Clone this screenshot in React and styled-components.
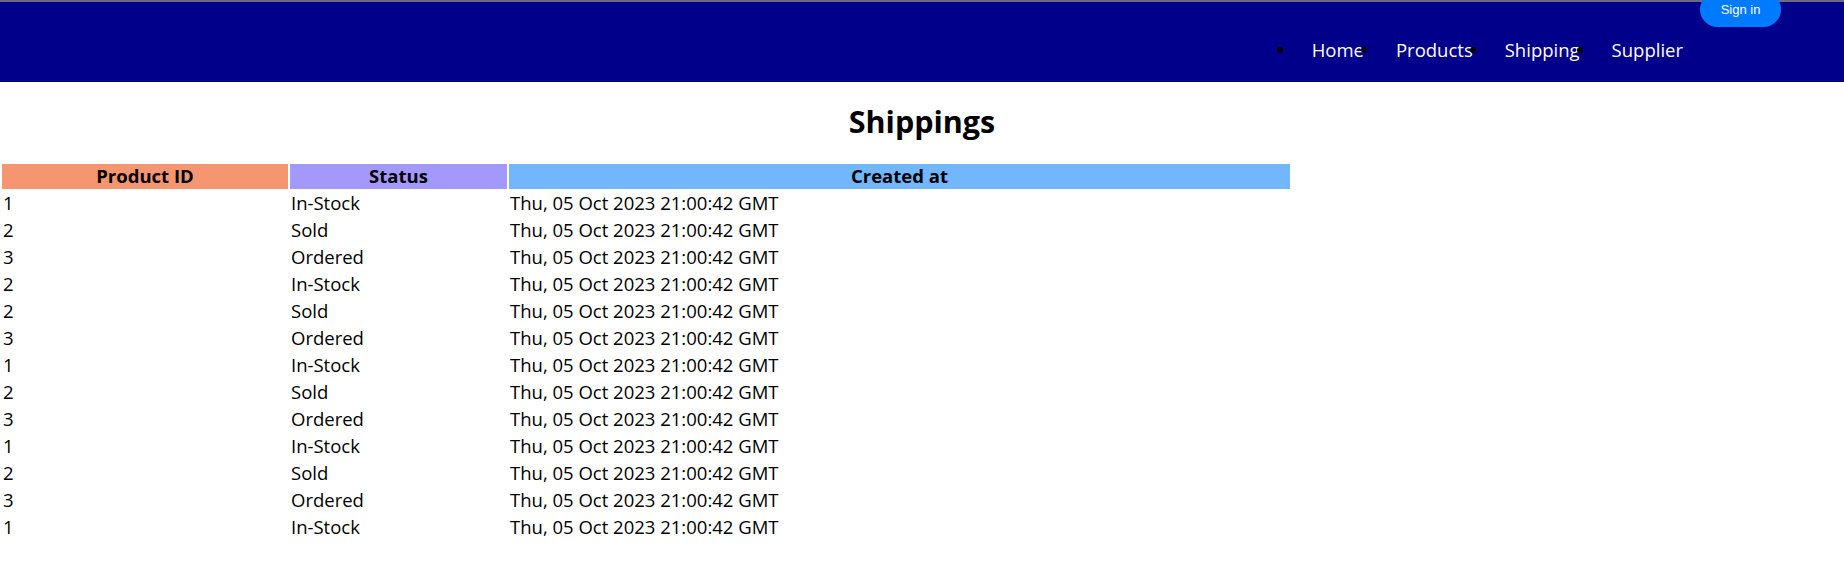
import React from 'react';
import styled, { createGlobalStyle } from 'styled-components';

const GlobalStyle = createGlobalStyle`
  body {
    margin: 0;
    font-family: "Open Sans", "Noto Sans", sans-serif;
    font-size: 18.5px;
    color: #000;
    background: #fff;
  }
`;

const Header = styled.header`
  display: flex;
  flex-direction: column;
  height: 80px;
  background: #00008b;
  border-top: 2px solid #706887;
`;

const TopRow = styled.div`
  display: flex;
  justify-content: flex-end;
  padding-right: 63px;
`;

const SignInButton = styled.button`
  margin-top: -10px;
  width: 81px;
  height: 35px;
  border: none;
  border-radius: 18px;
  background: #007bff;
  color: #fff;
  font-family: "Liberation Sans", Arial, sans-serif;
  font-size: 13px;
  padding: 0;
  cursor: pointer;
`;

const NavList = styled.ul`
  display: flex;
  justify-content: flex-end;
  list-style: none;
  margin: 11px 0 0;
  padding: 0 161px 0 0;
`;

const NavItem = styled.li`
  display: flex;
  align-items: center;
  line-height: 24px;

  &::before {
    content: '';
    width: 6px;
    height: 6px;
    border-radius: 50%;
    background: #000;
    margin-left: -3px;
    margin-right: 29px;
  }

  a {
    color: #fff;
    text-decoration: none;
  }
`;

const Title = styled.h1`
  margin: 21px 0 22px;
  text-align: center;
  font-size: 30.5px;
  line-height: 37px;
  font-weight: 700;
`;

const Table = styled.table`
  width: 1292px;
  table-layout: fixed;
  border-spacing: 2px;
  margin: 0;
`;

const HeadCell = styled.th`
  background: ${props => props.color};
  width: ${props => props.width || 'auto'};
  padding: 0 1px 2px;
  line-height: 23px;
  font-weight: 700;
  text-align: center;
`;

const Cell = styled.td`
  padding: 0 1px 2px;
  line-height: 23px;
  text-align: left;
`;

const links = ['Home', 'Products', 'Shipping', 'Supplier'];

const pattern = [
  [1, 'In-Stock'], [2, 'Sold'], [3, 'Ordered'],
  [2, 'In-Stock'], [2, 'Sold'], [3, 'Ordered'],
  [1, 'In-Stock'], [2, 'Sold'], [3, 'Ordered'],
  [1, 'In-Stock'], [2, 'Sold'], [3, 'Ordered'],
  [1, 'In-Stock'],
];

const shippings = pattern.map(([productId, status]) => ({
  productId,
  status,
  createdAt: 'Thu, 05 Oct 2023 21:00:42 GMT',
}));

const App = () => {
  return <>
    <GlobalStyle />
    <Header>
      <TopRow>
        <SignInButton>Sign in</SignInButton>
      </TopRow>
      <nav>
        <NavList>
          {links.map(link => <NavItem key={link}><a href="#">{link}</a></NavItem>)}
        </NavList>
      </nav>
    </Header>
    <main>
      <Title>Shippings</Title>
      <Table>
        <thead>
          <tr>
            <HeadCell color="#f59670" width="284px">Product ID</HeadCell>
            <HeadCell color="#a399fb" width="215px">Status</HeadCell>
            <HeadCell color="#72b6fd">Created at</HeadCell>
          </tr>
        </thead>
        <tbody>
          {shippings.map((s, i) => <tr key={i}>
            <Cell>{s.productId}</Cell>
            <Cell>{s.status}</Cell>
            <Cell>{s.createdAt}</Cell>
          </tr>)}
        </tbody>
      </Table>
    </main>
  </>
}

export default App;
